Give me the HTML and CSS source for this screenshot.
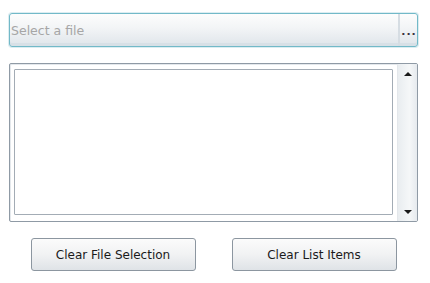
FILE: index.html
```html
<!DOCTYPE html>
<html lang="en">
<head>
    <meta charset="UTF-8">
    <title>File Picker</title>
    <link rel="stylesheet" href="styles.css">
</head>
<body>
    <div class="container">
        <div class="file-box">
            <input type="text" class="file-field" placeholder="Select a file" readonly>
            <div class="browse-btn"><span class="dots">...</span></div>
        </div>
        <div class="list-frame">
            <div class="list-area"><div class="list-inner"></div></div>
            <div class="scrollbar">
                <span class="arrow up"></span>
                <span class="arrow down"></span>
            </div>
        </div>
        <div class="actions">
            <button type="button">Clear File Selection</button>
            <button type="button">Clear List Items</button>
        </div>
    </div>
</body>
</html>
```

FILE: styles.css
```css
body {
    margin: 0;
    background-color: #ffffff;
    font-family: 'DejaVu Sans', Verdana, sans-serif;
    color: #1a1a1a;
}
.container {
    width: 409px;
    padding: 13px 0 0 9px;
}
.file-box {
    display: flex;
    height: 32px;
    border: 1px solid #72b9c8;
    border-radius: 3px;
    background: linear-gradient(#fdfdfd 0%, #f2f4f6 45%, #dfe5ea 100%);
    box-shadow: inset 0 -3px 0 #d7e0e6, 0 0 0 1px rgba(114, 185, 200, 0.25);
}
.file-field {
    flex: 1;
    min-width: 0;
    border: none;
    background: transparent;
    padding: 0 2px 0 1px;
    font-family: 'DejaVu Sans', Verdana, sans-serif;
    font-size: 12.5px;
    outline: none;
}
.file-field::placeholder {
    color: #a6a6a6;
}
.browse-btn {
    width: 17px;
    border-left: 2px solid #d6dde3;
    display: flex;
    align-items: center;
    justify-content: center;
}
.dots {
    font-size: 11px;
    font-weight: bold;
    color: #3a3040;
    letter-spacing: 1px;
    margin: 3px 0 0 1px;
}
.list-frame {
    display: flex;
    margin-top: 16px;
    height: 157px;
    border: 1px solid #8f9aa5;
    border-radius: 2px;
    box-shadow: inset 1px 1px 0 #e4e8ec;
}
.list-area {
    flex: 1;
    padding: 5px 4px 6px 4px;
}
.list-inner {
    height: 100%;
    box-sizing: border-box;
    border: 1px solid #a3acb5;
    border-radius: 1px;
    background: #ffffff;
}
.scrollbar {
    width: 19px;
    border-left: 1px solid #e3e7eb;
    background: linear-gradient(to right, #e9edf0, #f5f7f8 60%, #e6eaee);
    display: flex;
    flex-direction: column;
    justify-content: space-between;
    align-items: center;
    padding: 8px 0 7px;
}
.arrow {
    width: 0;
    height: 0;
    border-left: 4px solid transparent;
    border-right: 4px solid transparent;
}
.arrow.up {
    border-bottom: 4px solid #1a1a1a;
}
.arrow.down {
    border-top: 4px solid #1a1a1a;
}
.actions {
    display: flex;
    justify-content: center;
    gap: 36px;
    margin-top: 16px;
}
button {
    width: 165px;
    height: 33px;
    border: 1px solid #8c96a0;
    border-radius: 3px;
    background: linear-gradient(#fbfbfb 0%, #f1f2f3 50%, #dfe3e7 100%);
    font-family: 'DejaVu Sans', Verdana, sans-serif;
    font-size: 12px;
    color: #1a1a1a;
    padding: 0;
}
```
